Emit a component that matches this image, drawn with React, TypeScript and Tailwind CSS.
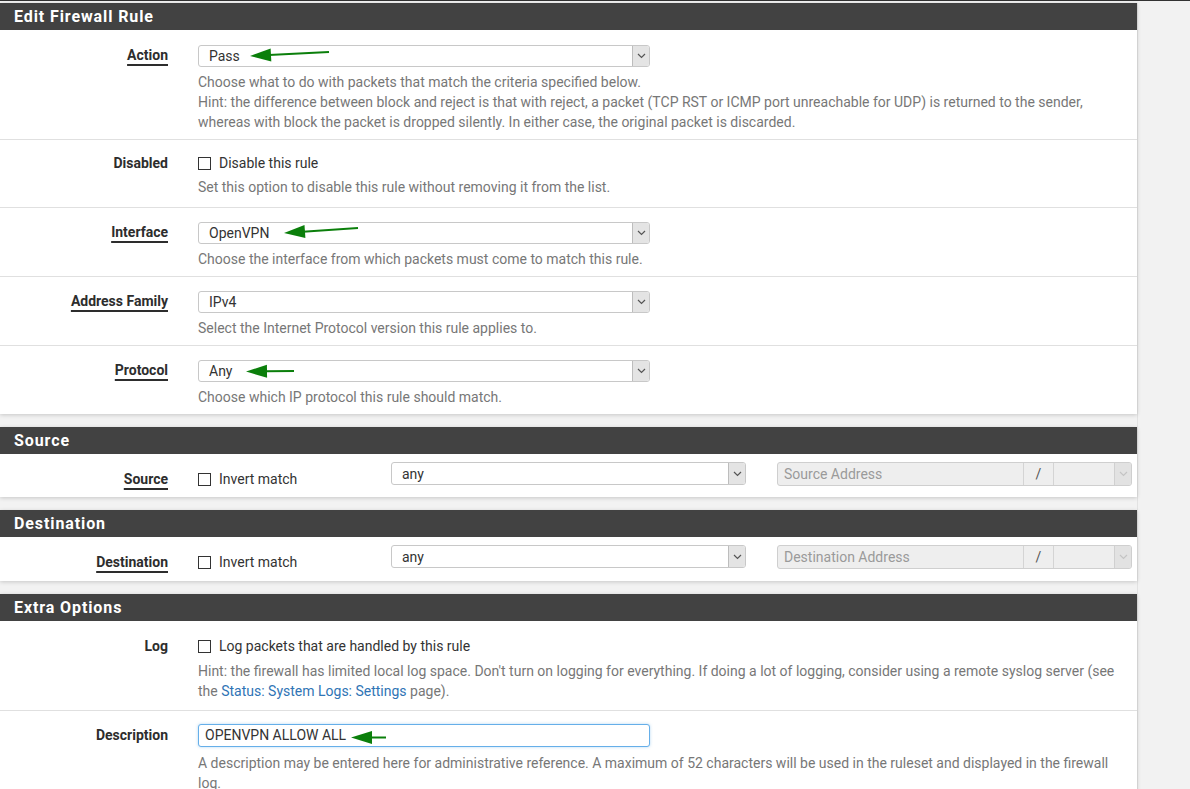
import React from 'react';

const Chevron: React.FC<{ light?: boolean }> = ({ light }) => (
  <svg width="9" height="6" viewBox="0 0 9 6" className={light ? 'text-[#c4c4c4]' : 'text-[#555]'}>
    <polyline points="1,1 4.5,4.5 8,1" fill="none" stroke="currentColor" strokeWidth="1.2" />
  </svg>
);

// green annotation arrow, drawn in coordinates of the box it sits on
const Arrow: React.FC<{ x1: number; y1: number; x2: number; y2: number }> = ({ x1, y1, x2, y2 }) => {
  const len = Math.hypot(x1 - x2, y1 - y2);
  const ux = (x1 - x2) / len;
  const uy = (y1 - y2) / len;
  const bx = x2 + ux * 21;
  const by = y2 + uy * 21;
  const head = `${x2},${y2} ${bx - uy * 6.5},${by + ux * 6.5} ${bx + uy * 6.5},${by - ux * 6.5}`;
  return (
    <svg className="pointer-events-none absolute left-0 top-0 overflow-visible" width="1" height="1">
      <line x1={x1} y1={y1} x2={bx - ux * 2} y2={by - uy * 2} stroke="#0b7f0b" strokeWidth="2" />
      <polygon points={head} fill="#0b7f0b" />
    </svg>
  );
};

const Select: React.FC<{ value: string; className?: string; children?: React.ReactNode }> = ({ value, className, children }) => (
  <div className={`relative flex items-center rounded-[3px] border border-[#c8c8c8] bg-white ${className ?? 'h-[22px] w-[452px]'}`}>
    <span className="flex-1 pl-[10px] text-[14px] leading-none text-[#333]">{value}</span>
    <span className="flex h-full w-[17px] items-center justify-center rounded-r-[2px] border-l border-[#bdbdbd] bg-[#e4e4e4]">
      <Chevron />
    </span>
    {children}
  </div>
);

const Check: React.FC<{ text: string }> = ({ text }) => (
  <label className="flex items-center gap-[8px] text-[14px] leading-[20px] text-[#333]">
    <span className="h-[13px] w-[13px] border border-[#333] bg-white" />
    {text}
  </label>
);

const Help: React.FC<{ children: React.ReactNode; className?: string }> = ({ children, className }) => (
  <p className={`text-[14px] leading-[20px] text-[#777] ${className ?? 'mt-[5px]'}`}>{children}</p>
);

const Label: React.FC<{ text: string; underline?: boolean; className?: string }> = ({ text, underline, className }) => (
  <div className={`w-[168px] shrink-0 text-right text-[14px] font-bold leading-[20px] text-[#2d2d2d] ${className ?? ''}`}>
    <span className={underline ? 'underline decoration-[1.5px] underline-offset-[4px]' : ''}>{text}</span>
  </div>
);

const Panel: React.FC<{ title: string; children: React.ReactNode }> = ({ title, children }) => (
  <section className="bg-white shadow-[0_1px_4px_rgba(0,0,0,0.18)]">
    <h2 className="h-[27px] bg-[#424242] px-[14px] text-[16px] font-bold leading-[27px] tracking-[0.9px] text-white">{title}</h2>
    {children}
  </section>
);

const AddressGroup: React.FC<{ placeholder: string }> = ({ placeholder }) => (
  <div className="ml-[31px] flex h-[24px] w-[355px] rounded-[3px] border border-[#cfcfcf] bg-[#eeeeee]">
    <span className="flex w-[245px] items-center px-[6px] text-[14px] text-[#9a9a9a]">{placeholder}</span>
    <span className="flex w-[31px] items-center justify-center border-x border-[#d4d4d4] text-[14px] text-[#555]">/</span>
    <span className="flex flex-1 items-center justify-end">
      <span className="flex h-full w-[17px] items-center justify-center rounded-r-[2px] border-l border-[#d0d0d0] bg-[#e2e2e2]">
        <Chevron light />
      </span>
    </span>
  </div>
);

const App: React.FC = () => {
  return (
    <div className="min-h-screen bg-[#f2f2f2] font-['Roboto',sans-serif]">
      <div className="h-px bg-[#333]" />
      <div className="mt-[2px] flex w-[1138px] flex-col gap-[13px] border-r border-[#e2e2e2]">
        <Panel title="Edit Firewall Rule">
          <div className="flex border-b border-[#e0e0e0] pt-[15px] pb-[7px]">
            <Label text="Action" underline />
            <div className="ml-[30px] w-[924px]">
              <Select value="Pass">
                <Arrow x1={130} y1={6} x2={51} y2={10} />
              </Select>
              <Help>
                Choose what to do with packets that match the criteria specified below.
                <br />
                Hint: the difference between block and reject is that with reject, a packet (TCP RST or ICMP port unreachable for UDP) is returned to the sender, whereas with block the packet is dropped silently. In either case, the original packet is discarded.
              </Help>
            </div>
          </div>

          <div className="flex border-b border-[#e0e0e0] pt-[13px] pb-[10px]">
            <Label text="Disabled" />
            <div className="ml-[30px] w-[924px]">
              <Check text="Disable this rule" />
              <Help className="mt-[4px]">Set this option to disable this rule without removing it from the list.</Help>
            </div>
          </div>

          <div className="flex border-b border-[#e0e0e0] pt-[14px] pb-[7px]">
            <Label text="Interface" underline />
            <div className="ml-[30px] w-[924px]">
              <Select value="OpenVPN">
                <Arrow x1={159} y1={5} x2={85} y2={10} />
              </Select>
              <Help>Choose the interface from which packets must come to match this rule.</Help>
            </div>
          </div>

          <div className="flex border-b border-[#e0e0e0] pt-[14px] pb-[7px]">
            <Label text="Address Family" underline />
            <div className="ml-[30px] w-[924px]">
              <Select value="IPv4" />
              <Help>Select the Internet Protocol version this rule applies to.</Help>
            </div>
          </div>

          <div className="flex pt-[14px] pb-[7px]">
            <Label text="Protocol" underline />
            <div className="ml-[30px] w-[924px]">
              <Select value="Any">
                <Arrow x1={95} y1={10} x2={47} y2={10.5} />
              </Select>
              <Help>Choose which IP protocol this rule should match.</Help>
            </div>
          </div>
        </Panel>

        <Panel title="Source">
          <div className="flex h-[43px]">
            <Label text="Source" underline className="pt-[15px]" />
            <div className="ml-[30px] flex">
              <div className="w-[163px] pt-[15px]">
                <Check text="Invert match" />
              </div>
              <div className="ml-[30px] pt-[8px]">
                <Select value="any" className="h-[23px] w-[355px]" />
              </div>
              <div className="pt-[8px]">
                <AddressGroup placeholder="Source Address" />
              </div>
            </div>
          </div>
        </Panel>

        <Panel title="Destination">
          <div className="flex h-[44px]">
            <Label text="Destination" underline className="pt-[15px]" />
            <div className="ml-[30px] flex">
              <div className="w-[163px] pt-[15px]">
                <Check text="Invert match" />
              </div>
              <div className="ml-[30px] pt-[8px]">
                <Select value="any" className="h-[23px] w-[355px]" />
              </div>
              <div className="pt-[8px]">
                <AddressGroup placeholder="Destination Address" />
              </div>
            </div>
          </div>
        </Panel>

        <Panel title="Extra Options">
          <div className="flex border-b border-[#e0e0e0] pt-[15px] pb-[9px]">
            <Label text="Log" />
            <div className="ml-[30px] w-[924px]">
              <Check text="Log packets that are handled by this rule" />
              <Help>
                Hint: the firewall has limited local log space. Don't turn on logging for everything. If doing a lot of logging, consider using a remote syslog server (see
                <br />
                the <a className="text-[#2f74b5]">Status: System Logs: Settings</a> page).
              </Help>
            </div>
          </div>

          <div className="flex pt-[13px] pb-[10px]">
            <Label text="Description" className="pt-[1px]" />
            <div className="ml-[30px] w-[924px]">
              <div className="relative flex h-[23px] w-[452px] items-center rounded-[3px] border border-[#66afe9] bg-white px-[6px] text-[14px] text-[#333] shadow-[0_0_3px_rgba(102,175,233,0.5)]">
                OPENVPN ALLOW ALL
                <Arrow x1={187} y1={12.5} x2={152} y2={12.5} />
              </div>
              <Help className="mt-[6px]">
                A description may be entered here for administrative reference. A maximum of 52 characters will be used in the ruleset and displayed in the firewall log.
              </Help>
            </div>
          </div>
        </Panel>
      </div>
    </div>
  );
};

export default App;
